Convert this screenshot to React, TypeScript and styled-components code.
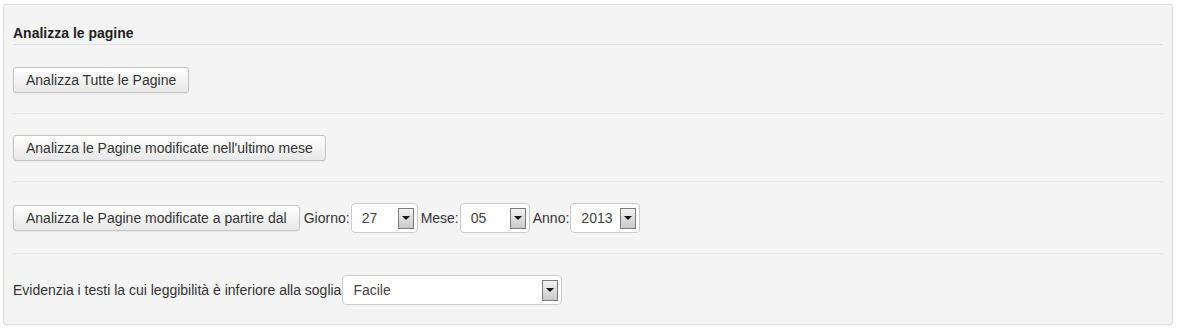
import React from 'react';
import styled, { createGlobalStyle } from 'styled-components';

const GlobalStyle = createGlobalStyle`
    body {
        margin: 0;
        background: #ffffff;
        font-family: "Liberation Sans", Arial, sans-serif;
        font-size: 14px;
        color: #333333;
    }
`

interface IRow{
    first?: boolean
    last?: boolean
}

interface ISelect{
    width: number
}

const Wrapper = styled.div`
    padding: 4px 4px 4px 3px;
`

const Panel = styled.div`
    background: #f4f4f4;
    border: 1px solid #dedede;
    border-radius: 3px;
    box-shadow: 0 0 2px rgba(0, 0, 0, 0.06);
    padding: 0 9px 0 9px;
`

const Heading = styled.h3`
    margin: 0;
    padding: 21px 0 3px 0;
    font-size: 14px;
    line-height: 15px;
    font-weight: bold;
    color: #222222;
    border-bottom: 1px solid #e2e2e2;
`

const Row = styled.div<IRow>`
    display: flex;
    align-items: center;
    padding: ${(props) => props.first ? '22px' : '21px'} 0 ${(props) => props.last ? '19px' : '20px'} 0;
    border-top: ${(props) => props.first ? 'none' : '1px solid #e8e8e8'};
    min-height: 26px;
`

const Button = styled.button`
    height: 26px;
    padding: 0 12px;
    font-family: "Liberation Sans", Arial, sans-serif;
    font-size: 14px;
    color: #333333;
    background: linear-gradient(#ffffff, #e8e8e8);
    border: 1px solid #c4c4c4;
    border-radius: 3px;
    box-shadow: 0 1px 1px rgba(0, 0, 0, 0.05);
    cursor: pointer;
    margin-right: 4px;
`

const Label = styled.span`
    font-size: 14px;
    color: #333333;
    margin-right: 1px;
`

const Select = styled.div<ISelect>`
    box-sizing: border-box;
    width: ${(props) => props.width}px;
    height: 30px;
    display: flex;
    align-items: center;
    justify-content: space-between;
    background: #ffffff;
    border: 1px solid #cccccc;
    border-radius: 4px;
    padding: 0 3px 0 10px;
    margin-right: 3px;
    font-size: 14px;
    color: #444444;
`

const Arrow = styled.span`
    box-sizing: border-box;
    width: 16px;
    height: 21px;
    border: 1px solid #7a7a7a;
    background: linear-gradient(#f2f2f2, #c9c9c9);
    display: flex;
    align-items: center;
    justify-content: center;

    &::after {
        content: '';
        width: 0;
        height: 0;
        border-left: 4px solid transparent;
        border-right: 4px solid transparent;
        border-top: 4px solid #111111;
    }
`

const Dropdown: React.FC<{ value: string, width: number }> = (props) => {
    return (
        <Select width={props.width}>
            <span>{props.value}</span>
            <Arrow />
        </Select>
    )
}

const App: React.FC = () => {
    return (
        <Wrapper>
            <GlobalStyle />
            <Panel>
                <Heading>Analizza le pagine</Heading>
                <Row first>
                    <Button>Analizza Tutte le Pagine</Button>
                </Row>
                <Row>
                    <Button>Analizza le Pagine modificate nell'ultimo mese</Button>
                </Row>
                <Row>
                    <Button>Analizza le Pagine modificate a partire dal</Button>
                    <Label>Giorno:</Label>
                    <Dropdown value="27" width={67} />
                    <Label>Mese:</Label>
                    <Dropdown value="05" width={70} />
                    <Label>Anno:</Label>
                    <Dropdown value="2013" width={70} />
                </Row>
                <Row last>
                    <Label>Evidenzia i testi la cui leggibilità è inferiore alla soglia</Label>
                    <Dropdown value="Facile" width={220} />
                </Row>
            </Panel>
        </Wrapper>
    )
}

export default App
